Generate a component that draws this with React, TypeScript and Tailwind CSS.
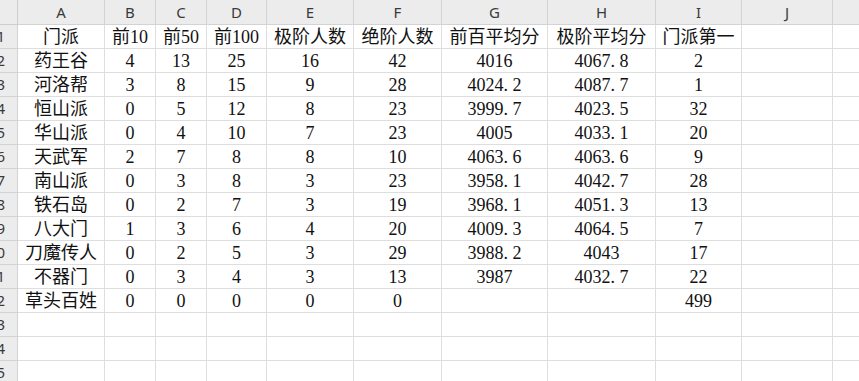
import React from "react";

const letters = ["A", "B", "C", "D", "E", "F", "G", "H", "I", "J", "K"];

const rows: string[][] = [
  ["门派", "前10", "前50", "前100", "极阶人数", "绝阶人数", "前百平均分", "极阶平均分", "门派第一"],
  ["药王谷", "4", "13", "25", "16", "42", "4016", "4067.8", "2"],
  ["河洛帮", "3", "8", "15", "9", "28", "4024.2", "4087.7", "1"],
  ["恒山派", "0", "5", "12", "8", "23", "3999.7", "4023.5", "32"],
  ["华山派", "0", "4", "10", "7", "23", "4005", "4033.1", "20"],
  ["天武军", "2", "7", "8", "8", "10", "4063.6", "4063.6", "9"],
  ["南山派", "0", "3", "8", "3", "23", "3958.1", "4042.7", "28"],
  ["铁石岛", "0", "2", "7", "3", "19", "3968.1", "4051.3", "13"],
  ["八大门", "1", "3", "6", "4", "20", "4009.3", "4064.5", "7"],
  ["刀魔传人", "0", "2", "5", "3", "29", "3988.2", "4043", "17"],
  ["不器门", "0", "3", "4", "3", "13", "3987", "4032.7", "22"],
  ["草头百姓", "0", "0", "0", "0", "0", "", "", "499"],
  [],
  [],
  [],
];

function CellText({ v }: { v: string }) {
  if (v.includes(".")) {
    const [a, b] = v.split(".");
    return (
      <>
        {a}
        <span className="inline-block w-[9px] text-left">.</span>
        {b}
      </>
    );
  }
  return <>{v}</>;
}

export default function App() {
  return (
    <div className="w-[859px] h-[381px] overflow-hidden bg-white">
      <div className="grid grid-cols-[18px_87px_51px_51px_60px_87px_88px_106px_108px_86px_91px_140px] grid-rows-[25px_repeat(15,24px)] w-[973px]">
        {/* corner */}
        <div className="bg-[#ececec] border-r border-b border-[#cdcdcd]" />
        {letters.map((l) => (
          <div
            key={l}
            className="bg-[#ececec] border-r border-b border-[#d3d3d3] flex items-center justify-center text-[15px] text-[#3a3a3a] font-['Noto_Sans',sans-serif] leading-none"
          >
            {l}
          </div>
        ))}
        {rows.map((r, ri) => (
          <React.Fragment key={ri}>
            <div className="bg-[#ececec] border-r border-b border-[#d3d3d3] overflow-hidden flex items-center justify-end pr-[12px] text-[15px] text-[#3a3a3a] font-['Noto_Sans',sans-serif] leading-none">
              <span className="shrink-0">{ri + 1}</span>
            </div>
            {letters.map((_, ci) => (
              <div
                key={ci}
                className="border-r border-b border-[#dedede] flex items-center justify-center whitespace-nowrap text-[18px] text-[#111] font-['Liberation_Serif','Noto_Sans_CJK_SC',serif] leading-none"
              >
                {r[ci] ? <CellText v={r[ci]} /> : null}
              </div>
            ))}
          </React.Fragment>
        ))}
      </div>
    </div>
  );
}
